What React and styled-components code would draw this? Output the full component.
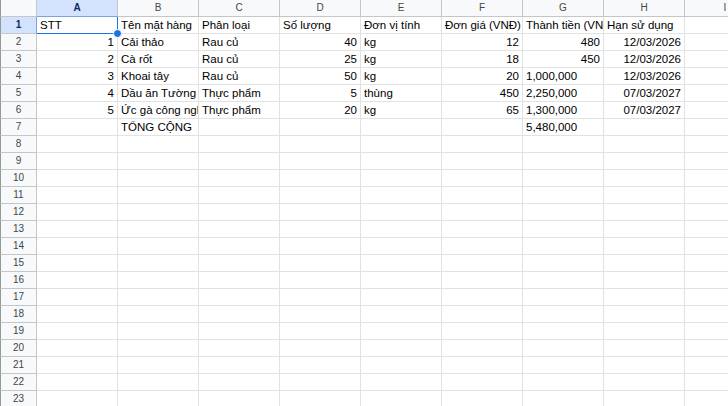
import React from 'react'
import styled, { createGlobalStyle } from 'styled-components'

const GlobalStyle = createGlobalStyle`
  html, body {
    margin: 0;
    padding: 0;
    background: #ffffff;
    overflow: hidden;
  }
`

const COLS = ['A', 'B', 'C', 'D', 'E', 'F', 'G', 'H', 'I']

// each row: [text, align] per column, undefined = empty
const data = [
  [['STT'], ['Tên mặt hàng'], ['Phân loại'], ['Số lượng'], ['Đơn vị tính'], ['Đơn giá (VNĐ)'], ['Thành tiền (VNĐ)'], ['Hạn sử dụng']],
  [['1', 'r'], ['Cải thảo'], ['Rau củ'], ['40', 'r'], ['kg'], ['12', 'r'], ['480', 'r'], ['12/03/2026', 'r']],
  [['2', 'r'], ['Cà rốt'], ['Rau củ'], ['25', 'r'], ['kg'], ['18', 'r'], ['450', 'r'], ['12/03/2026', 'r']],
  [['3', 'r'], ['Khoai tây'], ['Rau củ'], ['50', 'r'], ['kg'], ['20', 'r'], ['1,000,000'], ['12/03/2026', 'r']],
  [['4', 'r'], ['Dầu ăn Tường An'], ['Thực phẩm'], ['5', 'r'], ['thùng'], ['450', 'r'], ['2,250,000'], ['07/03/2027', 'r']],
  [['5', 'r'], ['Ức gà công nghiệp'], ['Thực phẩm'], ['20', 'r'], ['kg'], ['65', 'r'], ['1,300,000'], ['07/03/2027', 'r']],
  [null, ['TỔNG CỘNG'], null, null, null, null, ['5,480,000']],
]

const Sheet = styled.div`
  width: 728px;
  height: 406px;
  overflow: hidden;
  font-family: Arial, "Liberation Sans", sans-serif;
  background: #fff;
`

const Row = styled.div`
  display: flex;
  height: 17px;
`

const Corner = styled.div`
  flex: 0 0 37px;
  box-sizing: border-box;
  background: #f8f9fa;
  border-left: 1px solid #8f9c95;
  border-right: 1px solid #c4c7c5;
  border-bottom: 1px solid #c4c7c5;
`

const ColHead = styled.div`
  flex: 0 0 81px;
  box-sizing: border-box;
  background: ${p => (p.$active ? '#d3e3fd' : '#f8f9fa')};
  border-right: 1px solid #c4c7c5;
  border-bottom: 1px solid ${p => (p.$active ? '#7da2e0' : '#c4c7c5')};
  color: ${p => (p.$active ? '#0b2a5c' : '#444746')};
  font-weight: ${p => (p.$active ? 700 : 400)};
  font-size: 10px;
  line-height: 16px;
  text-align: center;
`

const RowHead = styled.div`
  flex: 0 0 37px;
  box-sizing: border-box;
  background: ${p => (p.$active ? '#d3e3fd' : '#f8f9fa')};
  border-left: 1px solid #8f9c95;
  border-right: 1px solid ${p => (p.$active ? '#7da2e0' : '#c4c7c5')};
  border-bottom: 1px solid #c4c7c5;
  color: ${p => (p.$active ? '#0b2a5c' : '#444746')};
  font-weight: ${p => (p.$active ? 700 : 400)};
  font-size: 10px;
  line-height: 16px;
  text-align: center;
`

const Cell = styled.div`
  position: relative;
  flex: 0 0 81px;
  box-sizing: border-box;
  border-right: 1px solid ${p => (p.$selected ? '#1a73e8' : '#e2e2e2')};
  border-bottom: 1px solid ${p => (p.$selected ? '#1a73e8' : '#e2e2e2')};
  padding: ${p => (p.$align === 'r' ? '0 3px 0 0' : '0 0 0 3px')};
  font-size: 11.5px;
  line-height: 17px;
  color: #000;
  white-space: nowrap;
  overflow: hidden;
  text-align: ${p => (p.$align === 'r' ? 'right' : 'left')};
`

const Handle = styled.span`
  position: absolute;
  right: -4px;
  bottom: -4px;
  width: 7px;
  height: 7px;
  border-radius: 50%;
  background: #1a73e8;
  border: 1px solid #fff;
  z-index: 2;
`

const HandleWrap = styled.div`
  position: relative;
  width: 0;
  height: 17px;
`

const App = () => {
  const rows = Array.from({ length: 23 }, (_, i) => data[i] || [])
  return (
    <>
      <GlobalStyle />
      <Sheet>
        <Row>
          <Corner />
          {COLS.map(c => (
            <ColHead key={c} $active={c === 'A'}>{c}</ColHead>
          ))}
        </Row>
        {rows.map((r, i) => (
          <Row key={i}>
            <RowHead $active={i === 0}>{i + 1}</RowHead>
            {COLS.map((c, j) => {
              const v = r[j]
              const sel = i === 0 && j === 0
              return (
                <React.Fragment key={c}>
                  <Cell $align={v && v[1]} $selected={sel}>
                    {v ? v[0] : ''}
                  </Cell>
                  {sel && (
                    <HandleWrap>
                      <Handle />
                    </HandleWrap>
                  )}
                </React.Fragment>
              )
            })}
          </Row>
        ))}
      </Sheet>
    </>
  )
}

export default App
